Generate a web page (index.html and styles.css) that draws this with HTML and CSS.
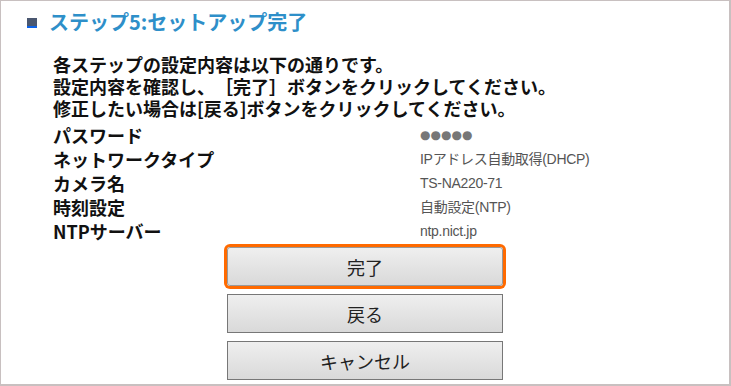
FILE: index.html
```html
<!DOCTYPE html>
<html lang="ja">
<head>
    <meta charset="UTF-8">
    <title>ステップ5:セットアップ完了</title>
    <link rel="stylesheet" href="styles.css">
</head>
<body>

    <div class="frame">
        <!-- タイトル -->
        <h1 class="step-title"><span class="bullet"></span>ステップ5:セットアップ完了</h1>

        <!-- 説明 -->
        <div class="intro">
            <p>各ステップの設定内容は以下の通りです。</p>
            <p>設定内容を確認し、［完了］ボタンをクリックしてください。</p>
            <p>修正したい場合は[戻る]ボタンをクリックしてください。</p>
        </div>

        <!-- 設定内容 -->
        <div class="summary">
            <div class="label">パスワード</div>
            <div class="value dots">●●●●●</div>
            <div class="label">ネットワークタイプ</div>
            <div class="value">IPアドレス自動取得(DHCP)</div>
            <div class="label">カメラ名</div>
            <div class="value">TS-NA220-71</div>
            <div class="label">時刻設定</div>
            <div class="value">自動設定(NTP)</div>
            <div class="label">NTPサーバー</div>
            <div class="value">ntp.nict.jp</div>
        </div>

        <!-- ボタン -->
        <div class="buttons">
            <button class="btn focused">完了</button>
            <button class="btn">戻る</button>
            <button class="btn">キャンセル</button>
        </div>
    </div>

</body>
</html>
```

FILE: styles.css
```css
/* 全体 */
body {
    margin: 0;
    padding: 0;
    background-color: #fff;
    font-family: 'Noto Sans CJK JP', 'Noto Sans', sans-serif;
    color: #111;
}

.frame {
    width: 731px;
    height: 386px;
    box-sizing: border-box;
    border: 1px solid #c8c0c0;
    border-right-width: 2px;
    border-bottom-width: 2px;
    padding: 8px 0 0 0;
}

/* タイトル */
.step-title {
    display: flex;
    align-items: center;
    margin: 0 0 0 26px;
    font-size: 20px;
    line-height: 26px;
    font-weight: bold;
    color: #2e8fc9;
}

.bullet {
    width: 10px;
    height: 8px;
    background-color: #4a5770;
    border-bottom: 2px solid #0b62e8;
    margin-right: 12px;
    margin-top: 2px;
}

/* 説明文 */
.intro {
    margin: 18px 0 0 52px;
}

.intro p {
    margin: 0;
    font-size: 18px;
    line-height: 22px;
    font-weight: bold;
    text-spacing-trim: space-all;
}

/* 設定内容 */
.summary {
    display: grid;
    grid-template-columns: 367px auto;
    margin: 4px 0 0 52px;
}

.summary .label {
    font-size: 18px;
    line-height: 24px;
    font-weight: bold;
}

.summary .value {
    font-family: 'Liberation Sans', 'Noto Sans CJK JP', sans-serif;
    font-size: 14px;
    line-height: 24px;
    color: #555;
    letter-spacing: -0.3px;
}

.summary .dots {
    font-family: 'DejaVu Sans', sans-serif;
    font-size: 12px;
    color: #777;
    letter-spacing: 0;
}

/* ボタン */
.buttons {
    display: flex;
    flex-direction: column;
    align-items: center;
    gap: 8px;
    margin-top: 4px;
}

.btn {
    width: 276px;
    height: 39px;
    border: 1px solid #777;
    background: linear-gradient(#efefef, #d9d9d9);
    font-family: 'Noto Sans CJK JP', sans-serif;
    font-size: 18px;
    color: #222;
    padding: 0;
}

.btn.focused {
    border-radius: 3px;
    box-shadow: 0 0 0 3px #ff6a00;
    border-color: #999;
}
```
